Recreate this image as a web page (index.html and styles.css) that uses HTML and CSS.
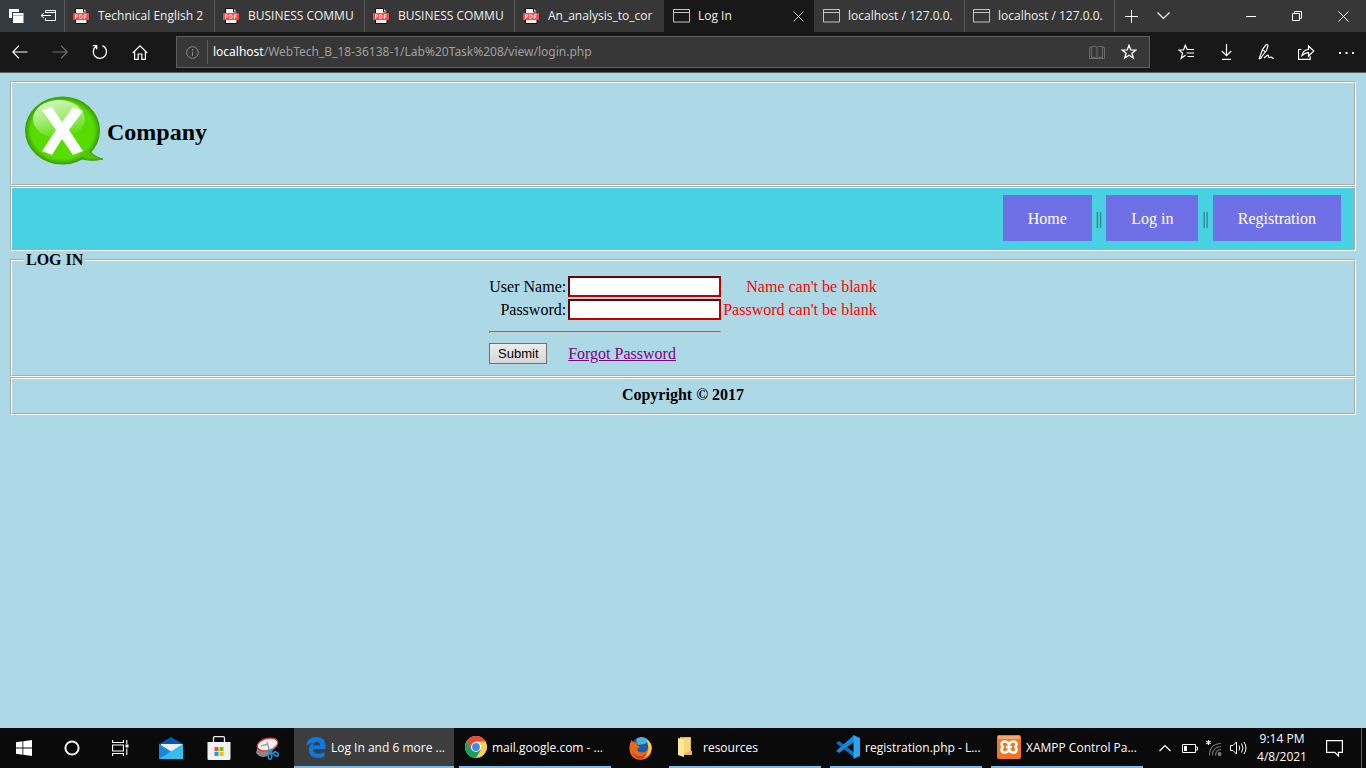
FILE: index.html
```html
<!DOCTYPE html>
<html lang="en">
<head>
<meta charset="utf-8">
<title>Log In</title>
<link rel="stylesheet" href="styles.css">
</head>
<body>
<svg class="defs" width="0" height="0" aria-hidden="true">
  <symbol id="pdf" viewBox="0 0 16 16">
    <path d="M2.500.5h8L14 4v11.500H2.500z" fill="#eee" stroke="#111"/>
    <path d="M10.500.5V4H14" fill="#fff" stroke="#111"/>
    <rect y="5" width="16" height="7" rx=".5" fill="#ff4444"/>
    <path d="M2.500 11V6.800h1.300q1 0 1 1.100t-1 1.100H2.500M6.700 6.700v3.800h1q1.500 0 1.500-1.900T7.700 6.700zM11.300 11V6.800h2.400M11.300 8.800h2" fill="none" stroke="#fff" stroke-width=".9"/>
  </symbol>
  <symbol id="window" viewBox="0 0 17 14">
    <path d="M.5.5h16v12.500H.5zM.5 3.500h16" fill="none" stroke="#c4c4c4"/>
  </symbol>
</svg>
<div class="screen">
  <header class="browser">
    <div class="tabstrip">
      <div class="tab-tools">
        <button aria-label="Tabs set aside"><svg width="15" height="15" viewBox="0 0 15 15"><path d="M0 0h10v3H3v6H0z" fill="#fff"/><path d="M4 4h10.500v10H4z" fill="#fff"/><path d="M4 6.500h10.500" stroke="#bbb"/></svg></button>
        <button aria-label="Set tabs aside"><svg width="17" height="12" viewBox="0 0 17 12" fill="none" stroke="#fff"><path d="M5.500 3V.5h10v10h-10V8M5 2.500h11M1 5.500h10M4 3L1 5.500 4 8"/></svg></button>
      </div>
      <div class="tab"><svg class="pdf"><use href="#pdf"/></svg><span>Technical English 2</span></div>
      <div class="tab"><svg class="pdf"><use href="#pdf"/></svg><span>BUSINESS COMMU</span></div>
      <div class="tab"><svg class="pdf"><use href="#pdf"/></svg><span>BUSINESS COMMU</span></div>
      <div class="tab"><svg class="pdf"><use href="#pdf"/></svg><span>An_analysis_to_cor</span></div>
      <div class="tab active"><svg class="win"><use href="#window"/></svg><span>Log In</span><button aria-label="Close tab"><svg width="11" height="11" viewBox="0 0 11 11"><path d="M.5.5l10 10M10.500.5l-10 10" stroke="#ccc"/></svg></button></div>
      <div class="tab"><svg class="win"><use href="#window"/></svg><span>localhost / 127.0.0.</span></div>
      <div class="tab"><svg class="win"><use href="#window"/></svg><span>localhost / 127.0.0.</span></div>
      <div class="new-tab">
        <button aria-label="New tab"><svg width="13" height="13" viewBox="0 0 13 13"><path d="M6.500 0v13M0 6.500h13" stroke="#fff"/></svg></button>
        <button aria-label="Tab list"><svg width="13" height="8" viewBox="0 0 13 8"><path d="M.5.5l6 6 6-6" fill="none" stroke="#fff" stroke-width="1.200"/></svg></button>
      </div>
      <div class="window-buttons">
        <button aria-label="Minimize"><svg width="10" height="10" viewBox="0 0 10 10"><path d="M0 5.500h10" stroke="#fff"/></svg></button>
        <button aria-label="Restore"><svg width="10" height="10" viewBox="0 0 10 10" fill="none" stroke="#fff"><path d="M.5 2.500h7v7h-7zM2.500 2.500v-2h7v7h-2"/></svg></button>
        <button aria-label="Close"><svg width="11" height="11" viewBox="0 0 11 11"><path d="M.5.5l10 10M10.500.5l-10 10" stroke="#fff"/></svg></button>
      </div>
    </div>
    <div class="toolbar">
      <div class="nav-tools">
        <button aria-label="Back"><svg width="16" height="14" viewBox="0 0 16 14" fill="none" stroke="#fff" stroke-width="1.200"><path d="M15.500 7H1M7 .7L.8 7 7 13.300"/></svg></button>
        <button aria-label="Forward"><svg width="16" height="14" viewBox="0 0 16 14" fill="none" stroke="#707070" stroke-width="1.200"><path d="M.5 7H15M9 .7L15.200 7 9 13.300"/></svg></button>
        <button aria-label="Refresh"><svg width="16" height="16" viewBox="0 0 16 16" fill="none" stroke="#fff" stroke-width="1.300"><path d="M4.500 1.600H.8M4.700 1v4.200M4.500 2.100A6.600 6.600 0 1 0 10.500 1.700"/></svg></button>
        <button aria-label="Home"><svg width="16" height="15" viewBox="0 0 16 15" fill="none" stroke="#fff" stroke-width="1.200"><path d="M.7 8L8 .9 15.300 8M2.600 6.500v7.800h3.600V9h3.600v5.300h3.600V6.500"/></svg></button>
      </div>
      <div class="address">
        <button aria-label="Site information"><svg width="13" height="13" viewBox="0 0 13 13" fill="none" stroke="#8a8a8a"><circle cx="6.500" cy="6.500" r="5.800"/><path d="M6.500 5.500v4.500M6.500 3v1.300"/></svg></button>
        <div class="url"><b>localhost</b>/WebTech_B_18-36138-1/Lab%20Task%208/view/login.php</div>
        <button aria-label="Reading view"><svg width="16" height="15" viewBox="0 0 16 15" fill="none" stroke="#6a6a6a"><path d="M8 2.500L6.500 1.500h-4v11h4L8 13.500l1.500-1h4v-11h-4zM8 2.500v11M2.500 2.500h-2v11h15v-11h-2"/></svg></button>
        <button aria-label="Favorite"><svg width="16" height="16" viewBox="0 0 16 16" fill="none" stroke="#fff" stroke-width="1.300"><path d="M8 1.200l1.800 4.700 5 .2-3.900 3.100 1.400 4.900L8 11.300l-4.300 2.800 1.400-4.900-3.900-3.100 5-.2z"/></svg></button>
      </div>
      <div class="hub">
        <button aria-label="Favorites hub"><svg width="17" height="16" viewBox="0 0 17 16" fill="none" stroke="#fff" stroke-width="1.200"><path d="M9.500 6L7.300 1.200 5.500 6H1l3.600 3.200-1.400 5.100L7.500 11.300M9 5.500h7M8.500 9H16M9.500 12.500H16"/></svg></button>
        <button aria-label="Downloads"><svg width="11" height="16" viewBox="0 0 11 16" fill="none" stroke="#fff" stroke-width="1.200"><path d="M5.500 0v11.500M.8 7l4.700 4.700L10.200 7M1 15.300h9"/></svg></button>
        <button aria-label="Add notes"><svg width="17" height="16" viewBox="0 0 17 16" fill="none" stroke="#fff" stroke-width="1.200"><path d="M1 15L4.500 5.500 8 .8q1.800-.6 2 1L8.500 6.500 3 13.500M4.800 6l2.500 1.800M1 15l3-1.500M6 14l3-2.500q1.800-1 1.500 1c0 2 2 .5 3 .5q.7 1.500 2.500 1.500"/></svg></button>
        <button aria-label="Share"><svg width="17" height="15" viewBox="0 0 17 15" fill="none" stroke="#fff" stroke-width="1.200"><path d="M3.500 4.500h-3v9.800h11.700v-3M4 10.500q1-5.800 6.500-6V1l5.300 5-5.300 5V7.600Q7 7.500 4 10.500z"/></svg></button>
        <button aria-label="More"><svg width="15" height="3" viewBox="0 0 15 3" fill="#fff"><path d="M0 1h2v2H0zM6.500 1h2v2h-2zM13 1h2v2h-2z"/></svg></button>
      </div>
    </div>
  </header>

  <main class="page">
    <fieldset class="brand">
      <div class="brand-row">
        <svg width="80" height="70" viewBox="0 0 80 70" role="img" aria-label="X logo">
          <defs>
            <radialGradient id="edge"><stop offset=".84" stop-color="#56dc00"/><stop offset="1" stop-color="#389900"/></radialGradient>
            <linearGradient id="gloss" x1=".25" y1="0" x2=".6" y2="1"><stop stop-color="#d4f6be"/><stop offset=".5" stop-color="#a0ec70"/><stop offset="1" stop-color="#58dc04"/></linearGradient>
          </defs>
          <path d="M66 55q4 6 13 8-12 3-24-1z" fill="#4abd00" stroke="#409f08"/>
          <ellipse cx="38.500" cy="34.500" rx="37.500" ry="34" fill="url(#edge)"/>
          <path d="M63 53q3 6 10 9.500-9 .5-17-2.500z" fill="#50c800"/>
          <ellipse cx="35" cy="23" rx="26" ry="19" fill="url(#gloss)"/>
          <path d="M18 14l10-3 10 15 11-15 10 4-14 19 14 21-10 4-11-16-10 16-10-4 14-21z" fill="#fff"/>
        </svg>
        <h2>Company</h2>
      </div>
    </fieldset>
    <fieldset class="menu">
      <nav><a href="#">Home</a> || <a href="#">Log in</a> || <a href="#">Registration</a></nav>
    </fieldset>
    <form>
      <fieldset class="login">
        <legend>LOG IN</legend>
        <table>
          <tr><td><label for="user">User Name:</label></td><td><input type="text" id="user"></td><td class="error">Name can't be blank</td></tr>
          <tr><td><label for="pass">Password:</label></td><td><input type="password" id="pass"></td><td class="error">Password can't be blank</td></tr>
          <tr><td colspan="2"><hr></td></tr>
          <tr class="actions"><td><button type="button">Submit</button></td><td><a href="#">Forgot Password</a></td></tr>
        </table>
      </fieldset>
    </form>
    <fieldset class="copyright">Copyright © 2017</fieldset>
  </main>

  <footer class="taskbar">
    <button aria-label="Start"><svg width="16" height="16" viewBox="0 0 16 16" fill="#fff"><path d="M0 2.300l6.500-1v6.200H0zM7.300 1.200L16 0v7.500H7.300zM0 8.400h6.500v6.300L0 13.800zM7.300 8.400H16V16l-8.700-1.200z"/></svg></button>
    <button aria-label="Cortana"><svg width="16" height="16" viewBox="0 0 16 16"><circle cx="8" cy="8" r="6.600" fill="none" stroke="#f2f2f2" stroke-width="2"/></svg></button>
    <button class="task-view" aria-label="Task view"><svg width="17" height="16" viewBox="0 0 17 16" fill="none" stroke="#fff" stroke-width="1.100"><path d="M.6 0v2.500h10.800V0M.6 5h10.800v6H.6zM.6 16v-2.500h10.800V16M14.800 0v4M14.800 8.500V15"/><path d="M13.500 4.500h3v3h-3z" fill="#fff" stroke="none"/></svg></button>
    <button aria-label="Mail"><svg width="24" height="22" viewBox="0 0 24 22"><path d="M0 7l12-7 12 7v8H0z" fill="#0858b0"/><path d="M2 7h21v10H2z" fill="#eee"/><path d="M0 7l12 8 12-8v15H0z" fill="#31b7f2"/><path d="M0 7l16 10L24 22H0z" fill="#1689dc"/><path d="M0 22L24 7v15z" fill="#35bdf4"/></svg></button>
    <button aria-label="Store"><svg width="24" height="24" viewBox="0 0 24 24"><path d="M6.500 7V2q0-1.300 1.300-1.300h8.400q1.300 0 1.300 1.300v5" fill="none" stroke="#eee" stroke-width="1.300"/><path d="M.5 6h23v16.500q0 1.500-1.500 1.500H2q-1.500 0-1.500-1.500z" fill="#f1f1f1"/><path d="M7.500 11h4v4h-4z" fill="#f35325"/><path d="M12.500 11h4v4h-4z" fill="#81bc06"/><path d="M7.500 16h4v4h-4z" fill="#05a6f0"/><path d="M12.500 16h4v4h-4z" fill="#ffba08"/></svg></button>
    <button class="last-pin" aria-label="Snipping Tool"><svg width="24" height="23" viewBox="0 0 24 23"><path d="M1 16q1-8 7-10l9 8-5 5q-6 3-11-3z" fill="#888"/><ellipse cx="12.500" cy="7.500" rx="10.500" ry="6" transform="rotate(-15 12.500 7.500)" fill="#f4f1f1" stroke="#d63737" stroke-width="1.300"/><path d="M6 9l7-2M12 5l2 7 3 5M20 9l-4 5" stroke="#9aa3ab" stroke-width="1.500" fill="none"/><g fill="none" stroke="#2487c8" stroke-width="1.700"><path d="M13 13l5 4M17 12l-1 5"/><ellipse cx="15" cy="19.500" rx="1.800" ry="2.800"/><ellipse cx="21" cy="17" rx="2.600" ry="1.700" transform="rotate(30 21 17)"/></g></svg></button>
    <button class="task current"><svg width="20" height="21" viewBox="0 0 20 21"><path d="M0 9Q1.500 0 10.500 0 20 .2 19.500 9v3H6.800q.5 4.700 5.800 4.800 3.400 0 6-1.800v4.400Q16 21 11.500 21 3 20.500 2.800 13 2.900 8 7.500 5.800 3 6 0 9zM7 8.400h7.200Q14 4.800 10.500 4.800 7.500 5.300 7 8.400z" fill="#0b7be0"/></svg><span>Log In and 6 more ...</span></button>
    <button class="task"><svg width="22" height="22" viewBox="0 0 22 22"><circle cx="11" cy="11" r="11" fill="#ffd04b"/><path d="M1.500 5.500A11 11 0 0 1 20.500 5.500H11L6.500 13.500z" fill="#e34d41"/><path d="M1.500 5.500A11 11 0 0 0 11 22l4.700-8-4.700-3-4.500 2.500z" fill="#16a05e"/><circle cx="11" cy="11" r="5" fill="#fff"/><circle cx="11" cy="11" r="3.900" fill="#4285f4"/></svg><span>mail.google.com - ...</span></button>
    <button class="firefox" aria-label="Firefox"><svg width="23" height="23" viewBox="0 0 23 23"><circle cx="12" cy="10.500" r="10" fill="#165fa8"/><path d="M7 2q6-4 11 0 1 4-3 5L9 8z" fill="#47b3df"/><path d="M2.500 3q1.200 2 3.500 2.500l3-.5L8 8l3 2-3 2q1 4 5 3.500 6-.5 6.500-6.500L18 2q5 4 5 10-1.500 10.500-11.500 11Q.5 22 .5 11 .5 6 2.500 3z" fill="#e66a1e"/><path d="M17.500 2Q23 6 22.500 12 21 20 13 21.500q7-5 6.500-11z" fill="#ffcb3b"/><path d="M3 13q2 6 8 6 5 0 7-4-1 7-7 7-7-1-8-9z" fill="#d93c1d"/></svg></button>
    <button class="task folder"><svg width="14" height="20" viewBox="0 0 14 20"><path d="M2 0h11v14h1v4H2z" fill="#e6b950"/><path d="M0 1l6 1.500V20L0 18z" fill="#ffe79b"/><path d="M6 1h6v13l-6 3z" fill="#f7d77d"/></svg><span>resources</span></button>
    <button class="task"><svg width="24" height="24" viewBox="0 0 24 24"><path d="M0 8l3-2 16 12v5z" fill="#0b70b8"/><path d="M0 16L18 0v7L3 18z" fill="#1489d3"/><path d="M17.500 0L24 3v18l-6.500 3z" fill="#27a4ef"/></svg><span>registration.php - L...</span></button>
    <button class="task"><svg width="24" height="24" viewBox="0 0 24 24"><rect width="24" height="24" rx="2" fill="#f17621"/><path d="M1 1h22v3H1z" fill="#f8a56a"/><path d="M12 9.500C10.500 5.500 5 5.500 4.500 9q0 2.500 2 3-2 .5-2 3c.5 3.500 6 3.500 7.500-.5 1.500 4 7 4 7.500.5q0-2.500-2-3 2-.5 2-3C19 5.500 13.500 5.500 12 9.500zM9 12h6" fill="none" stroke="#fff" stroke-width="2.600"/></svg><span>XAMPP Control Pa...</span></button>
    <div class="tray">
      <div class="status">
        <svg class="more" width="12" height="8" viewBox="0 0 12 8"><path d="M.5 7L6 1.500 11.500 7" fill="none" stroke="#fff" stroke-width="1.200"/></svg>
        <svg width="16" height="9" viewBox="0 0 16 9"><path d="M.5.5h13v8H.5zM14 3h1.500v3H14" fill="none" stroke="#fff"/><path d="M2 2h3v5H2z" fill="#fff"/></svg>
        <svg width="16" height="16" viewBox="0 0 16 16" fill="none" stroke="#777" stroke-width="1.100"><path d="M3.500 15.500Q3.500 4 15 3.500M6.500 15.500Q6.500 7 15 6.500M9.500 15.500Q9.500 10 15 9.500"/><circle cx="13.500" cy="14" r="1.500" fill="#888"/><path d="M2.500 0v5M.3 1.200l4.400 2.600M4.700 1.200L.3 3.800" stroke="#fff"/></svg>
        <svg width="17" height="14" viewBox="0 0 17 14" fill="none" stroke="#fff"><path d="M.5 4.500h2.500L6.500 1v12L3 9.500H.5zM9 4.500q1.500 2.500 0 5M11.500 2.500q3 4.500 0 9M14 1q4 6 0 12"/></svg>
      </div>
      <div class="clock"><span>9:14 PM</span><span>4/8/2021</span></div>
      <button aria-label="Notifications"><svg width="17" height="17" viewBox="0 0 17 17"><path d="M.6.6h15.800v11.800h-4v3.600l-3.600-3.600H.6z" fill="none" stroke="#fff" stroke-width="1.200"/></svg></button>
    </div>
  </footer>
</div>
</body>
</html>
```
FILE: styles.css
```css
* { box-sizing: border-box; }

body {
  margin: 0;
  font-family: "Open Sans", "Noto Sans", sans-serif;
  font-size: 12px;
}

button {
  font: inherit;
  color: inherit;
  background: none;
  border: 0;
  padding: 0;
  display: flex;
  align-items: center;
  justify-content: center;
}

svg { flex: none; display: block; }
.defs { position: absolute; }

.screen {
  min-height: 100vh;
  display: flex;
  flex-direction: column;
  background: #add8e6;
}

/* Browser chrome */
.browser { background: #181818; color: #f0f0f0; border-bottom: 1px solid #5e5e5e; }
.tabstrip { display: flex; height: 32px; background: #373737; }
.tab-tools { display: flex; width: 64px; background: #343a40; }
.tab-tools button { width: 32px; }
.tab {
  flex: 0 1 150px;
  min-width: 0;
  display: flex;
  align-items: center;
  padding: 0 8px;
  border-left: 1px solid #5a5a5a;
}
.tab span { flex: 1; padding-bottom: 2px; overflow: hidden; white-space: nowrap; }
.tab.active { background: #181818; border-color: #181818; }
.tab.active + .tab { border-color: #373737; }
.tab button { width: 16px; height: 32px; }
.pdf { width: 16px; height: 16px; margin-right: 9px; }
.win { width: 17px; height: 14px; margin-right: 8px; }
.new-tab { display: flex; border-left: 1px solid #5a5a5a; }
.new-tab button { width: 32px; }
.window-buttons { display: flex; margin-left: auto; }
.window-buttons button { width: 46px; }

.toolbar { display: flex; align-items: center; height: 40px; }
.nav-tools { display: flex; width: 176px; }
.nav-tools button { width: 40px; height: 40px; }
.address {
  flex: 1;
  display: flex;
  align-items: center;
  height: 32px;
  background: #373737;
  border: 1px solid #5e5e5e;
}
.address button { width: 32px; height: 30px; }
.address button:first-child { width: 30px; }
.address button:last-child { margin-right: 4px; }
.url {
  flex: 1;
  padding-left: 5px;
  border-left: 1px solid #5e5e5e;
  font-family: "Noto Sans", "Open Sans", sans-serif;
  line-height: 24px;
  color: #a0a0a0;
}
.url b { font-weight: 400; color: #fff; }
.hub { display: flex; width: 216px; padding-left: 16px; }
.hub button { width: 40px; height: 40px; }

/* Page */
.page {
  flex: 1;
  padding: 8px;
  font: 16px/18px "Liberation Serif", "Times New Roman", serif;
  color: #000;
}
fieldset { margin: 0 2px; padding: 0 12px; border: 2px groove #fff; }
.brand { padding: 13px 12px 18px; }
.brand-row { display: flex; align-items: center; gap: 3px; }
.brand h2 { margin: 0; padding-top: 2px; font-size: 24px; line-height: 28px; }
.menu { padding: 7px 13px 8px; background: #48d1e3; text-align: right; color: #235e70; }
.menu a {
  display: inline-block;
  padding: 15px 25px 13px;
  background: #7070e6;
  color: #fff;
  text-decoration: none;
}
.menu nav { display: flow-root; }
legend { padding: 0 2px; font-weight: bold; }
.login { padding-bottom: 9px; }
.login table { margin: 5px auto 0; border-spacing: 2px; }
.login td { padding: 0; text-align: right; }
.login input {
  display: block;
  width: 153px;
  height: 21px;
  border: 2px inset #c00000;
  background: #fff;
}
.login .error { color: #f00; }
.login hr { margin: 9px 0 8px; border: 1px inset #c8c8c8; }
.login .actions td { text-align: left; }
.login .actions button {
  width: 58px;
  height: 21px;
  border: 1px solid #707070;
  background: linear-gradient(#ececec, #d8d8d8);
  font: 13px "Liberation Sans", Arial, sans-serif;
}
.login a { color: #800080; }
.copyright { padding: 7px 12px 9px; text-align: center; font-weight: bold; }

/* Taskbar */
.taskbar { display: flex; height: 40px; background: #0a0a0a; color: #fff; }
.taskbar > button { width: 48px; }
.taskbar > .task-view { margin-right: 3px; }
.taskbar > .last-pin { margin-right: 3px; }
.taskbar > .task {
  width: 152px;
  margin-right: 9px;
  padding-left: 6px;
  gap: 5px;
  justify-content: flex-start;
  border-bottom: 2px solid #76b9ed;
  white-space: nowrap;
}
.task span { overflow: hidden; }
.taskbar > .current { width: 160px; margin-right: 5px; padding-left: 12px; background: #3d3d3d; }
.taskbar > .current + .task { margin-right: 0; }
.taskbar > .firefox { width: 58px; }
.taskbar > .folder { padding-left: 9px; gap: 11px; }
.tray {
  display: flex;
  align-items: center;
  margin-left: auto;
  margin-right: 4px;
  border-right: 1px solid #5e5e5e;
}
.status { display: flex; align-items: center; gap: 8px; margin-right: 9px; }
.status .more { margin-right: 3px; }
.clock { display: flex; flex-direction: column; align-items: center; line-height: 18px; width: 52px; }
.tray button { width: 53px; height: 40px; }
```
